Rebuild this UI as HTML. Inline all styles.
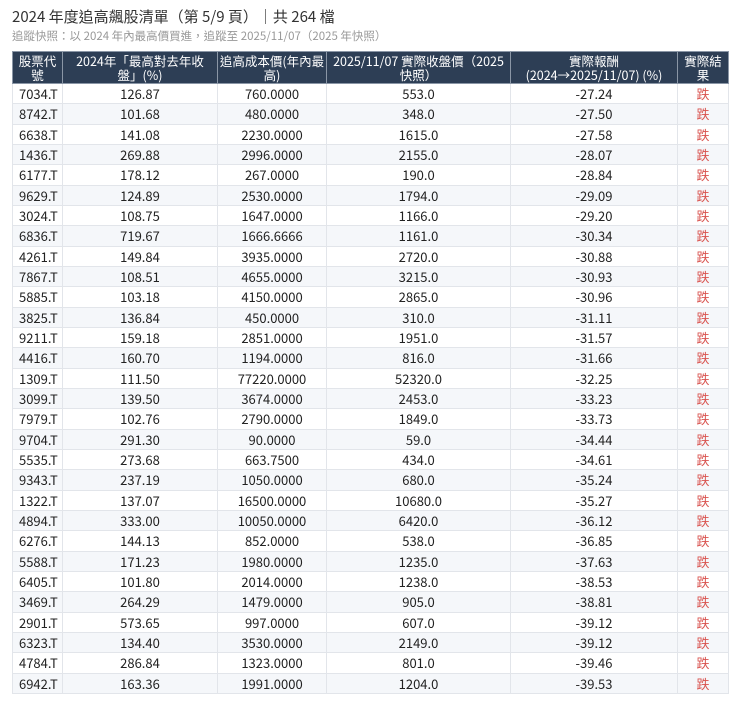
<!DOCTYPE html>
<html><head><meta charset="utf-8"><style>
body{margin:0;background:#fff;font-family:"Noto Sans CJK TC","Liberation Sans",sans-serif;color:#222}
h1{position:absolute;left:12px;top:6px;margin:0;font-size:15px;line-height:22px;font-weight:normal;color:#333}
.sub{position:absolute;left:12px;top:28px;font-size:11.5px;line-height:16px;color:#999}
table{position:absolute;left:12px;top:51px;width:716px;border-collapse:collapse;font-size:13px;table-layout:fixed}
th{background:#2d3e55;color:#fff;font-weight:normal;height:31px;line-height:14px;padding:0;border:1px solid #8a96a6;font-size:12.5px;overflow:hidden;white-space:nowrap}
td{height:19.33px;padding:0;text-align:center;border:1px solid #e2e5ea;line-height:19px;overflow:hidden;white-space:nowrap}
td:first-child{text-align:left;padding-left:6px}
tr:nth-child(even) td{background:#f5f7fa}
td.r{color:#d9534f}
</style></head><body>
<h1>2024 年度追高飆股清單（第 5/9 頁）｜共 264 檔</h1>
<div class="sub">追蹤快照：以 2024 年內最高價買進，追蹤至 2025/11/07（2025 年快照）</div>
<table>
<colgroup><col style="width:50px"><col style="width:155px"><col style="width:109px"><col style="width:184px"><col style="width:167px"><col style="width:51px"></colgroup>
<thead><tr><th>股票代<br>號</th><th>2024年「最高對去年收<br>盤」(%)</th><th>追高成本價(年內最<br>高)</th><th>2025/11/07 實際收盤價（2025<br>快照）</th><th>實際報酬<br>(2024→2025/11/07) (%)</th><th>實際結<br>果</th></tr></thead>
<tbody>
<tr><td>7034.T</td><td>126.87</td><td>760.0000</td><td>553.0</td><td>-27.24</td><td class="r">跌</td></tr>
<tr><td>8742.T</td><td>101.68</td><td>480.0000</td><td>348.0</td><td>-27.50</td><td class="r">跌</td></tr>
<tr><td>6638.T</td><td>141.08</td><td>2230.0000</td><td>1615.0</td><td>-27.58</td><td class="r">跌</td></tr>
<tr><td>1436.T</td><td>269.88</td><td>2996.0000</td><td>2155.0</td><td>-28.07</td><td class="r">跌</td></tr>
<tr><td>6177.T</td><td>178.12</td><td>267.0000</td><td>190.0</td><td>-28.84</td><td class="r">跌</td></tr>
<tr><td>9629.T</td><td>124.89</td><td>2530.0000</td><td>1794.0</td><td>-29.09</td><td class="r">跌</td></tr>
<tr><td>3024.T</td><td>108.75</td><td>1647.0000</td><td>1166.0</td><td>-29.20</td><td class="r">跌</td></tr>
<tr><td>6836.T</td><td>719.67</td><td>1666.6666</td><td>1161.0</td><td>-30.34</td><td class="r">跌</td></tr>
<tr><td>4261.T</td><td>149.84</td><td>3935.0000</td><td>2720.0</td><td>-30.88</td><td class="r">跌</td></tr>
<tr><td>7867.T</td><td>108.51</td><td>4655.0000</td><td>3215.0</td><td>-30.93</td><td class="r">跌</td></tr>
<tr><td>5885.T</td><td>103.18</td><td>4150.0000</td><td>2865.0</td><td>-30.96</td><td class="r">跌</td></tr>
<tr><td>3825.T</td><td>136.84</td><td>450.0000</td><td>310.0</td><td>-31.11</td><td class="r">跌</td></tr>
<tr><td>9211.T</td><td>159.18</td><td>2851.0000</td><td>1951.0</td><td>-31.57</td><td class="r">跌</td></tr>
<tr><td>4416.T</td><td>160.70</td><td>1194.0000</td><td>816.0</td><td>-31.66</td><td class="r">跌</td></tr>
<tr><td>1309.T</td><td>111.50</td><td>77220.0000</td><td>52320.0</td><td>-32.25</td><td class="r">跌</td></tr>
<tr><td>3099.T</td><td>139.50</td><td>3674.0000</td><td>2453.0</td><td>-33.23</td><td class="r">跌</td></tr>
<tr><td>7979.T</td><td>102.76</td><td>2790.0000</td><td>1849.0</td><td>-33.73</td><td class="r">跌</td></tr>
<tr><td>9704.T</td><td>291.30</td><td>90.0000</td><td>59.0</td><td>-34.44</td><td class="r">跌</td></tr>
<tr><td>5535.T</td><td>273.68</td><td>663.7500</td><td>434.0</td><td>-34.61</td><td class="r">跌</td></tr>
<tr><td>9343.T</td><td>237.19</td><td>1050.0000</td><td>680.0</td><td>-35.24</td><td class="r">跌</td></tr>
<tr><td>1322.T</td><td>137.07</td><td>16500.0000</td><td>10680.0</td><td>-35.27</td><td class="r">跌</td></tr>
<tr><td>4894.T</td><td>333.00</td><td>10050.0000</td><td>6420.0</td><td>-36.12</td><td class="r">跌</td></tr>
<tr><td>6276.T</td><td>144.13</td><td>852.0000</td><td>538.0</td><td>-36.85</td><td class="r">跌</td></tr>
<tr><td>5588.T</td><td>171.23</td><td>1980.0000</td><td>1235.0</td><td>-37.63</td><td class="r">跌</td></tr>
<tr><td>6405.T</td><td>101.80</td><td>2014.0000</td><td>1238.0</td><td>-38.53</td><td class="r">跌</td></tr>
<tr><td>3469.T</td><td>264.29</td><td>1479.0000</td><td>905.0</td><td>-38.81</td><td class="r">跌</td></tr>
<tr><td>2901.T</td><td>573.65</td><td>997.0000</td><td>607.0</td><td>-39.12</td><td class="r">跌</td></tr>
<tr><td>6323.T</td><td>134.40</td><td>3530.0000</td><td>2149.0</td><td>-39.12</td><td class="r">跌</td></tr>
<tr><td>4784.T</td><td>286.84</td><td>1323.0000</td><td>801.0</td><td>-39.46</td><td class="r">跌</td></tr>
<tr><td>6942.T</td><td>163.36</td><td>1991.0000</td><td>1204.0</td><td>-39.53</td><td class="r">跌</td></tr>
</tbody></table>
</body></html>
